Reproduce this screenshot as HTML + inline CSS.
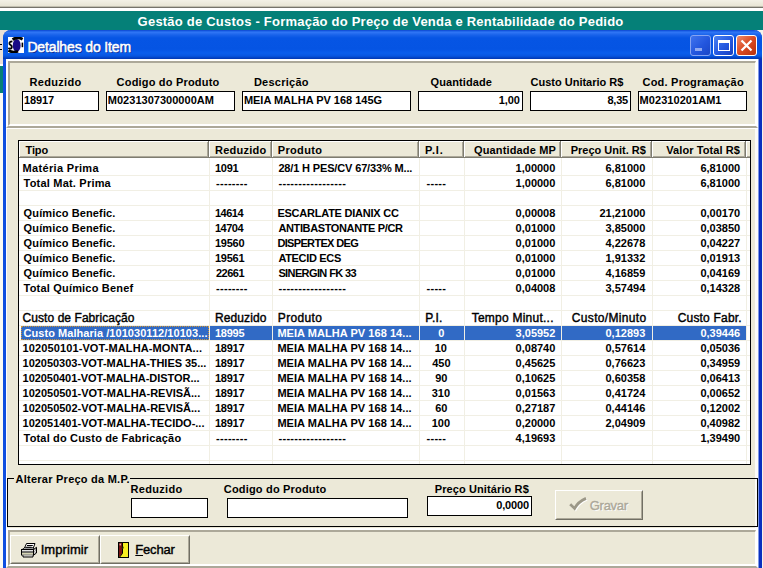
<!DOCTYPE html><html><head><meta charset="utf-8"><title>Detalhes do Item</title><style>
*{box-sizing:border-box;margin:0;padding:0}
html,body{width:763px;height:568px;overflow:hidden}
body{background:#ECE9D8;position:relative;font-family:"Liberation Sans",sans-serif;font-size:11px;color:#000}
.a{position:absolute}
.t{position:absolute;white-space:pre;line-height:20px;height:20px;font-weight:bold;font-size:11px}
.inp{position:absolute;background:#fff;border:1px solid #000}
</style></head><body>
<div class="a" style="left:0;top:0;width:763px;height:7px;background:linear-gradient(#F3F1E6,#E6E3D2)"></div>
<div class="a" style="left:0;top:6px;width:763px;height:1px;background:#C2BFB0"></div>
<div class="a" style="left:0;top:7px;width:763px;height:1px;background:#75736A"></div>
<div class="a" style="left:0;top:8px;width:763px;height:3px;background:#fff"></div>
<div class="a" style="left:0;top:11px;width:763px;height:19px;background:#058078"></div>
<div class="a" style="left:0;top:30px;width:12px;height:34px;background:#EADFD6"></div>
<div class="a" style="left:-3px;top:44px;width:5px;height:6px;border:1.5px solid #000;border-right:0;border-radius:3px 0 0 3px"></div>
<div class="a" style="left:0;top:64px;width:3px;height:2px;background:#fff"></div>
<div class="a" style="left:0;top:66px;width:3px;height:27px;background:#058078"></div>
<div class="a" style="left:0;top:93px;width:3px;height:475px;background:#FBFBF4"></div>
<div class="a" style="left:752px;top:30px;width:11px;height:12px;background:#F4F3EA"></div>
<div class="a" style="left:762px;top:30px;width:1px;height:538px;background:#F4F3EA"></div>
<div class="a" style="left:3px;top:30px;width:759px;height:538px;background:#ECE9D8;border-left:3px solid #0F4FE0;border-right:3px solid #0A2FBE;border-top-left-radius:8px;border-top-right-radius:8px"></div>
<div class="a" style="left:758px;top:59px;width:1px;height:509px;background:#7F98E6;z-index:3"></div>
<div class="a" style="left:755px;top:59px;width:3px;height:509px;background:#FCFBF8"></div>
<div class="a" style="left:3px;top:30px;width:759px;height:29px;border-top-left-radius:8px;border-top-right-radius:8px;background:linear-gradient(#0A3FC8 0,#1C62E8 1px,#2E74F4 2.5px,#1862EA 5px,#0655E4 8px,#0554E3 19px,#0A5EEC 23px,#0856E0 26px,#0340C0 28px,#0338B0 29px)"></div>
<svg class="a" style="left:8px;top:37px" width="16" height="16" viewBox="0 0 16 16"><rect width="16" height="16" fill="#fff"/><ellipse cx="8.7" cy="8.4" rx="3.9" ry="6.4" fill="#180A86"/><path d="M4.6 2.6 Q9.5 -.8 14.6 2.2" stroke="#000" stroke-width="2.8" fill="none"/><path d="M.4 13.4 Q5 16.2 10 14.2" stroke="#000" stroke-width="2.8" fill="none"/><path d="M4.4 4.4 Q.8 4.6 1.6 7.2 Q4.6 8.8 3.6 11 Q2 12.4 .4 10.8" stroke="#000" stroke-width="1.8" fill="none"/><path d="M14.4 5.6 V10.2" stroke="#000" stroke-width="1.6"/></svg>
<div class="a" style="left:690px;top:35px;width:21px;height:21px;border:1px solid #86A4F2;border-radius:3px;background:linear-gradient(135deg,#3F74EE,#2356DE 55%,#1A46C6)"></div>
<div class="a" style="left:695px;top:48px;width:7px;height:3px;background:#8FA9F1"></div>
<div class="a" style="left:713px;top:35px;width:21px;height:21px;border:1px solid #fff;border-radius:3px;background:linear-gradient(135deg,#4C82F2,#2458E0 55%,#173FBE)"></div>
<div class="a" style="left:718px;top:40px;width:12px;height:11px;border:1.5px solid #fff;border-top-width:3px"></div>
<div class="a" style="left:736px;top:35px;width:21px;height:21px;border:1px solid #fff;border-radius:3px;background:linear-gradient(135deg,#EE8C6C,#DA4A22 50%,#B8300E)"></div>
<svg class="a" style="left:736px;top:35px" width="21" height="21" viewBox="0 0 21 21"><path d="M5.5 5.5 L15.5 15.5 M15.5 5.5 L5.5 15.5" stroke="#fff" stroke-width="2.3" stroke-linecap="butt"/></svg>
<div class="a" style="left:6px;top:59px;width:752px;height:69px;border:2px solid;border-color:#fff #fff #ACA899 #fff"></div>
<div class="a" style="left:8px;top:61px;width:748px;height:65px;border:2px solid;border-right-width:1px;border-color:#ACA899 #fff #fff #ACA899"></div>
<div class="inp" style="left:22px;top:91px;width:77px;height:20px"></div>
<div class="inp" style="left:106px;top:91px;width:129px;height:20px"></div>
<div class="inp" style="left:242px;top:91px;width:169px;height:20px"></div>
<div class="inp" style="left:418px;top:91px;width:105px;height:20px"></div>
<div class="inp" style="left:530px;top:91px;width:101px;height:20px"></div>
<div class="inp" style="left:638px;top:91px;width:109px;height:20px"></div>
<div class="a" style="left:6px;top:128px;width:752px;height:400px;border-top:1px solid #fff;border-left:1px solid #fff"></div>
<div class="a" style="left:18px;top:140px;width:733px;height:325px;background:#fff;border:1px solid #000"></div>
<div class="a" style="left:19px;top:141px;width:731px;height:17px;background:#ECE9D8;border-top:1px solid #fff;border-bottom:1px solid #7E7C70"></div>
<div class="a" style="left:19px;top:156px;width:731px;height:1px;background:#ACA899"></div>
<div class="a" style="left:19px;top:141px;width:1px;height:16px;background:#fff"></div>
<div class="a" style="left:19px;top:175px;width:731px;height:1px;background:#F1EFE4"></div>
<div class="a" style="left:19px;top:190px;width:731px;height:1px;background:#F1EFE4"></div>
<div class="a" style="left:19px;top:205px;width:731px;height:1px;background:#F1EFE4"></div>
<div class="a" style="left:19px;top:220px;width:731px;height:1px;background:#F1EFE4"></div>
<div class="a" style="left:19px;top:235px;width:731px;height:1px;background:#F1EFE4"></div>
<div class="a" style="left:19px;top:250px;width:731px;height:1px;background:#F1EFE4"></div>
<div class="a" style="left:19px;top:265px;width:731px;height:1px;background:#F1EFE4"></div>
<div class="a" style="left:19px;top:280px;width:731px;height:1px;background:#F1EFE4"></div>
<div class="a" style="left:19px;top:295px;width:731px;height:1px;background:#F1EFE4"></div>
<div class="a" style="left:19px;top:310px;width:731px;height:1px;background:#F1EFE4"></div>
<div class="a" style="left:19px;top:325px;width:731px;height:1px;background:#F1EFE4"></div>
<div class="a" style="left:19px;top:340px;width:731px;height:1px;background:#F1EFE4"></div>
<div class="a" style="left:19px;top:355px;width:731px;height:1px;background:#F1EFE4"></div>
<div class="a" style="left:19px;top:370px;width:731px;height:1px;background:#F1EFE4"></div>
<div class="a" style="left:19px;top:385px;width:731px;height:1px;background:#F1EFE4"></div>
<div class="a" style="left:19px;top:400px;width:731px;height:1px;background:#F1EFE4"></div>
<div class="a" style="left:19px;top:415px;width:731px;height:1px;background:#F1EFE4"></div>
<div class="a" style="left:19px;top:430px;width:731px;height:1px;background:#F1EFE4"></div>
<div class="a" style="left:19px;top:445px;width:731px;height:1px;background:#F1EFE4"></div>
<div class="a" style="left:19px;top:460px;width:731px;height:1px;background:#F1EFE4"></div>
<div class="a" style="left:21px;top:326px;width:726px;height:14px;background:#316AC5"></div>
<div class="a" style="left:209px;top:158px;width:1px;height:306px;background:#F1EFE4"></div>
<div class="a" style="left:207px;top:142px;width:1px;height:15px;background:#ACA899"></div>
<div class="a" style="left:208px;top:141px;width:1px;height:17px;background:#7E7C70"></div>
<div class="a" style="left:209px;top:141px;width:1px;height:16px;background:#fff"></div>
<div class="a" style="left:272px;top:158px;width:1px;height:306px;background:#F1EFE4"></div>
<div class="a" style="left:270px;top:142px;width:1px;height:15px;background:#ACA899"></div>
<div class="a" style="left:271px;top:141px;width:1px;height:17px;background:#7E7C70"></div>
<div class="a" style="left:272px;top:141px;width:1px;height:16px;background:#fff"></div>
<div class="a" style="left:419px;top:158px;width:1px;height:306px;background:#F1EFE4"></div>
<div class="a" style="left:417px;top:142px;width:1px;height:15px;background:#ACA899"></div>
<div class="a" style="left:418px;top:141px;width:1px;height:17px;background:#7E7C70"></div>
<div class="a" style="left:419px;top:141px;width:1px;height:16px;background:#fff"></div>
<div class="a" style="left:464px;top:158px;width:1px;height:306px;background:#F1EFE4"></div>
<div class="a" style="left:462px;top:142px;width:1px;height:15px;background:#ACA899"></div>
<div class="a" style="left:463px;top:141px;width:1px;height:17px;background:#7E7C70"></div>
<div class="a" style="left:464px;top:141px;width:1px;height:16px;background:#fff"></div>
<div class="a" style="left:561px;top:158px;width:1px;height:306px;background:#F1EFE4"></div>
<div class="a" style="left:559px;top:142px;width:1px;height:15px;background:#ACA899"></div>
<div class="a" style="left:560px;top:141px;width:1px;height:17px;background:#7E7C70"></div>
<div class="a" style="left:561px;top:141px;width:1px;height:16px;background:#fff"></div>
<div class="a" style="left:652px;top:158px;width:1px;height:306px;background:#F1EFE4"></div>
<div class="a" style="left:650px;top:142px;width:1px;height:15px;background:#ACA899"></div>
<div class="a" style="left:651px;top:141px;width:1px;height:17px;background:#7E7C70"></div>
<div class="a" style="left:652px;top:141px;width:1px;height:16px;background:#fff"></div>
<div class="a" style="left:746px;top:158px;width:1px;height:306px;background:#F1EFE4"></div>
<div class="a" style="left:744px;top:142px;width:1px;height:15px;background:#ACA899"></div>
<div class="a" style="left:745px;top:141px;width:1px;height:17px;background:#7E7C70"></div>
<div class="a" style="left:746px;top:141px;width:1px;height:16px;background:#fff"></div>
<div class="a" style="left:21px;top:326px;width:188px;height:14px;border:1px dotted #CE953A"></div>
<div class="a" style="left:7px;top:478px;width:751px;height:49px;border:1px solid #000"></div>
<div class="a" style="left:14px;top:478px;width:116px;height:1px;background:#ECE9D8"></div>
<div class="inp" style="left:131px;top:498px;width:77px;height:20px"></div>
<div class="inp" style="left:227px;top:498px;width:181px;height:20px"></div>
<div class="inp" style="left:427px;top:496px;width:105px;height:20px"></div>
<div class="a" style="left:555px;top:490px;width:88px;height:30px;border:1px solid;border-color:#fff #716F64 #716F64 #fff"></div>
<div class="a" style="left:556px;top:491px;width:86px;height:28px;border:1px solid;border-color:#ECE9D8 #ACA899 #ACA899 #ECE9D8"></div>
<div class="a" style="left:6px;top:528px;width:752px;height:40px;border:2px solid;border-color:#fff #fff #ACA899 #fff"></div>
<div class="a" style="left:8px;top:530px;width:748px;height:36px;border:2px solid;border-right-width:1px;border-color:#ACA899 #fff #fff #ACA899"></div>
<div class="a" style="left:10px;top:535px;width:90px;height:29px;border:1px solid;border-color:#fff #716F64 #716F64 #fff"></div>
<div class="a" style="left:11px;top:536px;width:88px;height:27px;border:1px solid;border-color:#ECE9D8 #ACA899 #ACA899 #ECE9D8"></div>
<div class="a" style="left:100px;top:535px;width:90px;height:29px;border:1px solid;border-color:#fff #716F64 #716F64 #fff"></div>
<div class="a" style="left:101px;top:536px;width:88px;height:27px;border:1px solid;border-color:#ECE9D8 #ACA899 #ACA899 #ECE9D8"></div>
<svg class="a" style="left:21px;top:543px" width="16" height="15" viewBox="0 0 16 15"><path d="M5.5 .5 H14 L12.3 5 H3.5 Z" fill="#fff" stroke="#000"/><path d="M6 2.5 H11.8 M5.2 4.2 H10.6" stroke="#000"/><path d="M.5 7 L3.2 5 H12.6 L12.5 7 Z" fill="#fff" stroke="#000" stroke-width=".8"/><rect x=".5" y="6.5" width="12" height="5.5" fill="#E4E4E4" stroke="#000"/><rect x="1" y="9.5" width="11" height="2" fill="#D4D4B4"/><path d="M.5 9 H12.5" stroke="#000"/><path d="M12.5 6.5 L15.5 4.3 V10 L12.5 12.3 Z" fill="#A4A4A4" stroke="#000"/><path d="M13.5 7 v.8 M14.5 8 v.8 M13.5 9.4 v.8" stroke="#fff" stroke-width=".8"/><rect x="2" y="12.4" width="10" height="1.3" fill="#E4E4E4"/><path d="M2 12.4 V14 H12 V12.4" fill="none" stroke="#000"/></svg>
<svg class="a" style="left:118px;top:542px" width="11" height="16" viewBox="0 0 11 16"><rect x=".5" y=".5" width="10" height="15" fill="#F6EE22" stroke="#000"/><path d="M1 1 H4.2 V11.3 L1.6 14.8 H1 Z" fill="#7A1414"/><path d="M4.5 .5 V11.4 L1.7 15" fill="none" stroke="#000"/><rect x="1.6" y="1.6" width="1.2" height="1.8" fill="#E8D0D0"/><rect x="3.9" y="4.9" width="1.6" height="1.4" fill="#F6EE22" stroke="#000" stroke-width=".5"/></svg>
<svg class="a" style="left:568px;top:496px" width="22" height="16" viewBox="0 0 22 16"><path d="M3.2 9.2 L7.6 13.4 Q11 7 19 3.4" fill="none" stroke="#fff" stroke-width="2.6"/><path d="M2.2 8.2 L6.6 12.4 Q10 6 18 2.4" fill="none" stroke="#9C9888" stroke-width="2.8"/></svg>
<div class="t" style="left:137.6px;top:12px;font-size:13px;color:#fff;letter-spacing:0.22px;">Gestão de Custos - Formação do Preço de Venda e Rentabilidade do Pedido</div>
<div class="t" style="left:27.4px;top:37px;font-size:14px;font-weight:normal;-webkit-text-stroke:.4px;color:#fff;letter-spacing:-0.14px;-webkit-text-stroke:.5px;text-shadow:1px 1px 0 #0A2A90">Detalhes do Item</div>
<div class="t" style="left:29.6px;top:72px;font-size:11px;letter-spacing:0.29px;">Reduzido</div>
<div class="t" style="left:116.6px;top:72px;font-size:11px;letter-spacing:0.19px;">Codigo do Produto</div>
<div class="t" style="left:253.9px;top:72px;font-size:11px;letter-spacing:0.25px;">Descrição</div>
<div class="t" style="left:430.5px;top:72px;font-size:11px;letter-spacing:0.1px;">Quantidade</div>
<div class="t" style="left:530.6px;top:72px;font-size:11px;letter-spacing:-0.01px;">Custo Unitario R$</div>
<div class="t" style="left:642.5px;top:72px;font-size:11px;letter-spacing:0.22px;">Cod. Programação</div>
<div class="t" style="left:24.1px;top:90px;font-size:11px;letter-spacing:-0.12px;">18917</div>
<div class="t" style="left:107.8px;top:90px;font-size:11px;letter-spacing:0.02px;">M0231307300000AM</div>
<div class="t" style="left:243.9px;top:90px;font-size:11px;letter-spacing:-0.02px;">MEIA MALHA PV 168 145G</div>
<div class="t" style="left:498.8px;top:90px;font-size:11px;letter-spacing:-0.13px;">1,00</div>
<div class="t" style="left:607.5px;top:90px;font-size:11px;letter-spacing:-0.27px;">8,35</div>
<div class="t" style="left:639.6px;top:90px;font-size:11px;letter-spacing:0.05px;">M02310201AM1</div>
<div class="t" style="left:25.5px;top:140px;font-size:11px;letter-spacing:-0.13px;">Tipo</div>
<div class="t" style="left:215px;top:140px;font-size:11px;letter-spacing:0.23px;">Reduzido</div>
<div class="t" style="left:277.8px;top:140px;font-size:11px;letter-spacing:0.33px;">Produto</div>
<div class="t" style="left:425.1px;top:140px;font-size:11px;letter-spacing:0.87px;">P.I.</div>
<div class="t" style="left:474px;top:140px;font-size:11px;letter-spacing:0.15px;">Quantidade MP</div>
<div class="t" style="left:570.7px;top:140px;font-size:11px;">Preço Unit. R$</div>
<div class="t" style="left:666.3px;top:140px;font-size:11px;letter-spacing:0.08px;">Valor Total R$</div>
<div class="t" style="left:22.6px;top:158px;font-size:11px;letter-spacing:0.32px;">Matéria Prima</div>
<div class="t" style="left:23.6px;top:173px;font-size:11px;letter-spacing:0.2px;">Total Mat. Prima</div>
<div class="t" style="left:23.6px;top:203px;font-size:11px;letter-spacing:0.13px;">Químico Benefic.</div>
<div class="t" style="left:23.6px;top:218px;font-size:11px;letter-spacing:0.13px;">Químico Benefic.</div>
<div class="t" style="left:23.6px;top:233px;font-size:11px;letter-spacing:0.13px;">Químico Benefic.</div>
<div class="t" style="left:23.6px;top:248px;font-size:11px;letter-spacing:0.13px;">Químico Benefic.</div>
<div class="t" style="left:23.6px;top:263px;font-size:11px;letter-spacing:0.13px;">Químico Benefic.</div>
<div class="t" style="left:23.6px;top:278px;font-size:11px;letter-spacing:0.19px;">Total Químico Benef</div>
<div class="t" style="left:22.6px;top:308px;font-size:12px;font-weight:normal;-webkit-text-stroke:.4px;letter-spacing:0.06px;">Custo de Fabricação</div>
<div class="t" style="left:23.6px;top:323px;font-size:11px;color:#fff;letter-spacing:0.05px;">Custo Malharia /101030112/10103...</div>
<div class="t" style="left:22.6px;top:338px;font-size:11px;letter-spacing:0.11px;">102050101-VOT-MALHA-MONTA...</div>
<div class="t" style="left:22.6px;top:353px;font-size:11px;letter-spacing:-0.03px;">102050303-VOT-MALHA-THIES 35...</div>
<div class="t" style="left:22.6px;top:368px;font-size:11px;letter-spacing:-0.05px;">102050401-VOT-MALHA-DISTOR...</div>
<div class="t" style="left:22.6px;top:383px;font-size:11px;letter-spacing:-0.01px;">102050501-VOT-MALHA-REVISÃ...</div>
<div class="t" style="left:22.6px;top:398px;font-size:11px;letter-spacing:-0.01px;">102050502-VOT-MALHA-REVISÃ...</div>
<div class="t" style="left:22.6px;top:413px;font-size:11px;letter-spacing:-0.01px;">102051401-VOT-MALHA-TECIDO-...</div>
<div class="t" style="left:23.6px;top:428px;font-size:11px;letter-spacing:0.16px;">Total do Custo de Fabricação</div>
<div class="t" style="left:215px;top:158px;font-size:11px;letter-spacing:-0.27px;">1091</div>
<div class="t" style="left:216px;top:173px;font-size:11px;letter-spacing:0.3px;">--------</div>
<div class="t" style="left:215px;top:203px;font-size:11px;letter-spacing:-0.5px;">14614</div>
<div class="t" style="left:215px;top:218px;font-size:11px;letter-spacing:-0.5px;">14704</div>
<div class="t" style="left:215px;top:233px;font-size:11px;letter-spacing:-0.25px;">19560</div>
<div class="t" style="left:215px;top:248px;font-size:11px;letter-spacing:-0.25px;">19561</div>
<div class="t" style="left:216px;top:263px;font-size:11px;letter-spacing:-0.5px;">22661</div>
<div class="t" style="left:216px;top:278px;font-size:11px;letter-spacing:0.3px;">--------</div>
<div class="t" style="left:215px;top:308px;font-size:12px;font-weight:normal;-webkit-text-stroke:.4px;letter-spacing:0.09px;">Reduzido</div>
<div class="t" style="left:215px;top:323px;font-size:11px;color:#fff;letter-spacing:-0.25px;">18995</div>
<div class="t" style="left:215px;top:338px;font-size:11px;letter-spacing:-0.25px;">18917</div>
<div class="t" style="left:215px;top:353px;font-size:11px;letter-spacing:-0.25px;">18917</div>
<div class="t" style="left:215px;top:368px;font-size:11px;letter-spacing:-0.25px;">18917</div>
<div class="t" style="left:215px;top:383px;font-size:11px;letter-spacing:-0.25px;">18917</div>
<div class="t" style="left:215px;top:398px;font-size:11px;letter-spacing:-0.25px;">18917</div>
<div class="t" style="left:215px;top:413px;font-size:11px;letter-spacing:-0.25px;">18917</div>
<div class="t" style="left:216px;top:428px;font-size:11px;letter-spacing:0.3px;">--------</div>
<div class="t" style="left:278.4px;top:158px;font-size:11px;letter-spacing:-0.15px;">28/1 H PES/CV 67/33% M...</div>
<div class="t" style="left:278.4px;top:173px;font-size:11px;letter-spacing:0.33px;">-----------------</div>
<div class="t" style="left:277.4px;top:203px;font-size:11px;letter-spacing:-0.23px;">ESCARLATE DIANIX CC</div>
<div class="t" style="left:278.4px;top:218px;font-size:11px;letter-spacing:-0.37px;">ANTIBASTONANTE P/CR</div>
<div class="t" style="left:277.4px;top:233px;font-size:11px;letter-spacing:-0.66px;">DISPERTEX DEG</div>
<div class="t" style="left:278.4px;top:248px;font-size:11px;letter-spacing:-0.33px;">ATECID ECS</div>
<div class="t" style="left:278.4px;top:263px;font-size:11px;letter-spacing:-0.61px;">SINERGIN FK 33</div>
<div class="t" style="left:278.4px;top:278px;font-size:11px;letter-spacing:0.33px;">-----------------</div>
<div class="t" style="left:277.8px;top:308px;font-size:12px;font-weight:normal;-webkit-text-stroke:.4px;letter-spacing:0.33px;">Produto</div>
<div class="t" style="left:278.4px;top:428px;font-size:11px;letter-spacing:0.33px;">-----------------</div>
<div class="t" style="left:277.4px;top:323px;font-size:11px;color:#fff;letter-spacing:0.05px;">MEIA MALHA PV 168 14...</div>
<div class="t" style="left:277.4px;top:338px;font-size:11px;letter-spacing:0.05px;">MEIA MALHA PV 168 14...</div>
<div class="t" style="left:277.4px;top:353px;font-size:11px;letter-spacing:0.05px;">MEIA MALHA PV 168 14...</div>
<div class="t" style="left:277.4px;top:368px;font-size:11px;letter-spacing:0.05px;">MEIA MALHA PV 168 14...</div>
<div class="t" style="left:277.4px;top:383px;font-size:11px;letter-spacing:0.05px;">MEIA MALHA PV 168 14...</div>
<div class="t" style="left:277.4px;top:398px;font-size:11px;letter-spacing:0.05px;">MEIA MALHA PV 168 14...</div>
<div class="t" style="left:277.4px;top:413px;font-size:11px;letter-spacing:0.05px;">MEIA MALHA PV 168 14...</div>
<div class="t" style="left:426.5px;top:173px;font-size:11px;letter-spacing:0.28px;">-----</div>
<div class="t" style="left:426.5px;top:278px;font-size:11px;letter-spacing:0.28px;">-----</div>
<div class="t" style="left:426.5px;top:428px;font-size:11px;letter-spacing:0.28px;">-----</div>
<div class="t" style="left:425.3px;top:308px;font-size:12px;font-weight:normal;-webkit-text-stroke:.4px;letter-spacing:0.17px;">P.I.</div>
<div class="t" style="left:438.2px;top:323px;font-size:11px;color:#fff;">0</div>
<div class="t" style="left:434.7px;top:338px;font-size:11px;">10</div>
<div class="t" style="left:432.2px;top:353px;font-size:11px;">450</div>
<div class="t" style="left:435.2px;top:368px;font-size:11px;">90</div>
<div class="t" style="left:431.7px;top:383px;font-size:11px;">310</div>
<div class="t" style="left:435.2px;top:398px;font-size:11px;">60</div>
<div class="t" style="left:431.7px;top:413px;font-size:11px;">100</div>
<div class="t" style="left:515.6px;top:158px;font-size:11px;">1,00000</div>
<div class="t" style="left:605.5px;top:158px;font-size:11px;">6,81000</div>
<div class="t" style="left:700.4px;top:158px;font-size:11px;">6,81000</div>
<div class="t" style="left:515.6px;top:173px;font-size:11px;">1,00000</div>
<div class="t" style="left:605.5px;top:173px;font-size:11px;">6,81000</div>
<div class="t" style="left:700.4px;top:173px;font-size:11px;">6,81000</div>
<div class="t" style="left:515.6px;top:203px;font-size:11px;">0,00008</div>
<div class="t" style="left:599.5px;top:203px;font-size:11px;">21,21000</div>
<div class="t" style="left:700.4px;top:203px;font-size:11px;">0,00170</div>
<div class="t" style="left:515.6px;top:218px;font-size:11px;">0,01000</div>
<div class="t" style="left:605.5px;top:218px;font-size:11px;">3,85000</div>
<div class="t" style="left:700.4px;top:218px;font-size:11px;">0,03850</div>
<div class="t" style="left:515.6px;top:233px;font-size:11px;">0,01000</div>
<div class="t" style="left:605.5px;top:233px;font-size:11px;">4,22678</div>
<div class="t" style="left:700.4px;top:233px;font-size:11px;">0,04227</div>
<div class="t" style="left:515.6px;top:248px;font-size:11px;">0,01000</div>
<div class="t" style="left:605.5px;top:248px;font-size:11px;">1,91332</div>
<div class="t" style="left:700.4px;top:248px;font-size:11px;">0,01913</div>
<div class="t" style="left:515.6px;top:263px;font-size:11px;">0,01000</div>
<div class="t" style="left:605.5px;top:263px;font-size:11px;">4,16859</div>
<div class="t" style="left:700.4px;top:263px;font-size:11px;">0,04169</div>
<div class="t" style="left:515.6px;top:278px;font-size:11px;">0,04008</div>
<div class="t" style="left:605.5px;top:278px;font-size:11px;">3,57494</div>
<div class="t" style="left:700.4px;top:278px;font-size:11px;">0,14328</div>
<div class="t" style="left:515.6px;top:323px;font-size:11px;color:#fff;">3,05952</div>
<div class="t" style="left:605.5px;top:323px;font-size:11px;color:#fff;">0,12893</div>
<div class="t" style="left:700.4px;top:323px;font-size:11px;color:#fff;">0,39446</div>
<div class="t" style="left:515.6px;top:338px;font-size:11px;">0,08740</div>
<div class="t" style="left:605.5px;top:338px;font-size:11px;">0,57614</div>
<div class="t" style="left:700.4px;top:338px;font-size:11px;">0,05036</div>
<div class="t" style="left:515.6px;top:353px;font-size:11px;">0,45625</div>
<div class="t" style="left:605.5px;top:353px;font-size:11px;">0,76623</div>
<div class="t" style="left:700.4px;top:353px;font-size:11px;">0,34959</div>
<div class="t" style="left:515.6px;top:368px;font-size:11px;">0,10625</div>
<div class="t" style="left:605.5px;top:368px;font-size:11px;">0,60358</div>
<div class="t" style="left:700.4px;top:368px;font-size:11px;">0,06413</div>
<div class="t" style="left:515.6px;top:383px;font-size:11px;">0,01563</div>
<div class="t" style="left:605.5px;top:383px;font-size:11px;">0,41724</div>
<div class="t" style="left:700.4px;top:383px;font-size:11px;">0,00652</div>
<div class="t" style="left:515.6px;top:398px;font-size:11px;">0,27187</div>
<div class="t" style="left:605.5px;top:398px;font-size:11px;">0,44146</div>
<div class="t" style="left:700.4px;top:398px;font-size:11px;">0,12002</div>
<div class="t" style="left:515.6px;top:413px;font-size:11px;">0,20000</div>
<div class="t" style="left:605.5px;top:413px;font-size:11px;">2,04909</div>
<div class="t" style="left:700.4px;top:413px;font-size:11px;">0,40982</div>
<div class="t" style="left:515.6px;top:428px;font-size:11px;">4,19693</div>
<div class="t" style="left:700.4px;top:428px;font-size:11px;">1,39490</div>
<div class="t" style="left:471.7px;top:308px;font-size:12px;font-weight:normal;-webkit-text-stroke:.4px;letter-spacing:0.24px;">Tempo Minut...</div>
<div class="t" style="left:571.8px;top:308px;font-size:12px;font-weight:normal;-webkit-text-stroke:.4px;letter-spacing:0.33px;">Custo/Minuto</div>
<div class="t" style="left:677.7px;top:308px;font-size:12px;font-weight:normal;-webkit-text-stroke:.4px;letter-spacing:0.19px;">Custo Fabr.</div>
<div class="t" style="left:15.6px;top:469px;font-size:11px;letter-spacing:0.24px;">Alterar Preço da M.P.</div>
<div class="t" style="left:130.6px;top:479px;font-size:11px;letter-spacing:0.29px;">Reduzido</div>
<div class="t" style="left:223.8px;top:479px;font-size:11px;letter-spacing:0.18px;">Codigo do Produto</div>
<div class="t" style="left:434.7px;top:479px;font-size:11px;letter-spacing:0.11px;">Preço Unitário R$</div>
<div class="t" style="left:496.2px;top:495px;font-size:11px;letter-spacing:-0.16px;">0,0000</div>
<div class="t" style="left:589.8px;top:496px;font-size:13px;font-weight:normal;-webkit-text-stroke:.4px;color:#ACA899;letter-spacing:-0.3px;text-shadow:1px 1px 0 #fff">Gravar</div>
<div class="t" style="left:40.7px;top:540px;font-size:13px;font-weight:normal;-webkit-text-stroke:.4px;letter-spacing:0.07px;">Imprimir</div>
<div class="t" style="left:135.3px;top:540px;font-size:13px;font-weight:normal;-webkit-text-stroke:.4px;letter-spacing:-0.2px;"><u>F</u>echar</div>
</body></html>
